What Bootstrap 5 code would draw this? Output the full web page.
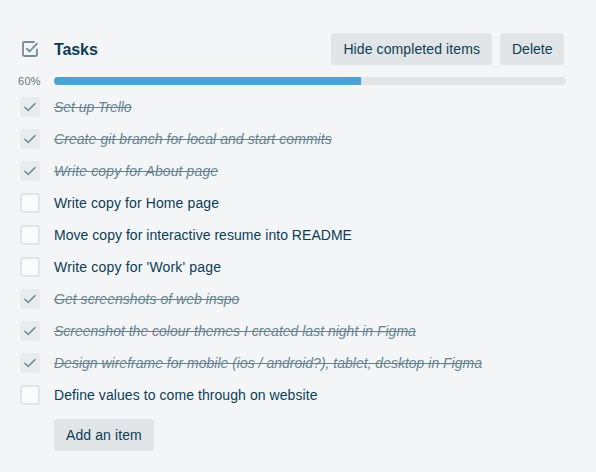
<!DOCTYPE html>
<html lang="en">
<head>
<meta charset="utf-8">
<meta name="viewport" content="width=device-width, initial-scale=1">
<title>Tasks</title>
<link href="https://cdn.jsdelivr.net/npm/bootstrap@5.3.0/dist/css/bootstrap.min.css" rel="stylesheet">
<style>
  body { background: #f4f5f7; color: #0c3d54; font: 14px/20px "Liberation Sans", Arial, sans-serif; }
  .checklist { padding: 33px 30px 21px 18px; }
  .gutter { width: 36px; flex: none; }
  .gutter svg { display: block; }
  .title { font-size: 16px; font-weight: 700; line-height: 20px; letter-spacing: -.1px; padding-top: 1px; }
  .btn-soft { --bs-btn-bg: #e2e5e8; --bs-btn-color: #0c3d54; --bs-btn-hover-bg: #d6dadd; --bs-btn-border-width: 0;
    --bs-btn-font-size: 14px; --bs-btn-line-height: 20px; --bs-btn-padding-x: 12px; --bs-btn-padding-y: 6px; --bs-btn-border-radius: 3px;
    height: 32px; white-space: nowrap; letter-spacing: .1px; }
  .btn-delete { width: 64px; letter-spacing: 0; }
  .header-actions { margin-right: 2px; }
  .percent { font-size: 11px; line-height: 10px; letter-spacing: .3px; color: #5e7884; }
  .meter { --bs-progress-height: 8px; --bs-progress-bg: #e2e5e8; --bs-progress-bar-bg: #4aa3d3; --bs-progress-border-radius: 4px; }
  .meter-row { height: 26px; padding-top: 6px; }
  .task { height: 32px; }
  .tick { width: 20px; height: 20px; margin: 0 14px 0 2px; flex: none; border-radius: 3px; background: #fafcfc; border: 2px solid #dfe5e7; }
  .done .tick { background: #e9ecef; border: 0; color: #7893a0; }
  .done .task-name { font-style: italic; text-decoration: line-through; color: #668390; }
  .tick svg { display: block; }
  .tight { letter-spacing: -.06px; }
  .snug { letter-spacing: .035px; }
  .airy { letter-spacing: .07px; }
  .loose { letter-spacing: .115px; }
  .wide { letter-spacing: .17px; }
  .add-row { padding: 8px 0 0 36px; }
</style>
<script src="https://cdn.jsdelivr.net/npm/bootstrap@5.3.0/dist/js/bootstrap.bundle.min.js" defer></script>
</head>
<body>
<svg class="d-none" aria-hidden="true">
  <symbol id="check" viewBox="0 0 20 20"><path d="M4.9 10.3 8.2 13.4 15 6.6" fill="none" stroke="currentColor" stroke-width="1.6" stroke-linecap="round" stroke-linejoin="round"/></symbol>
</svg>
<main class="checklist">
  <header class="d-flex align-items-center">
    <div class="gutter">
      <svg width="24" height="24" viewBox="0 0 24 24" fill="none" stroke="#738d99" stroke-width="1.8" stroke-linecap="round" stroke-linejoin="round"><path d="M16 5H6.2Q5 5 5 6.2V17.8Q5 19 6.2 19H17.8Q19 19 19 17.8V12.5"/><path d="M8.8 11.6 11.6 14.5 18.9 6.6"/></svg>
    </div>
    <h1 class="title mb-0 me-auto">Tasks</h1>
    <div class="header-actions d-flex gap-2">
      <button class="btn btn-soft" type="button">Hide completed items</button>
      <button class="btn btn-soft btn-delete" type="button">Delete</button>
    </div>
  </header>
  <div class="meter-row d-flex align-items-center">
    <div class="gutter percent">60%</div>
    <div class="progress meter flex-grow-1" role="progressbar" aria-valuenow="60" aria-valuemin="0" aria-valuemax="100"><div class="progress-bar" style="width: 60%"></div></div>
  </div>
  <ul class="list-unstyled mb-0">
    <li class="task done d-flex align-items-center"><span class="tick"><svg width="20" height="20"><use href="#check"/></svg></span><span class="task-name tight">Set up Trello</span></li>
    <li class="task done d-flex align-items-center"><span class="tick"><svg width="20" height="20"><use href="#check"/></svg></span><span class="task-name airy">Create git branch for local and start commits</span></li>
    <li class="task done d-flex align-items-center"><span class="tick"><svg width="20" height="20"><use href="#check"/></svg></span><span class="task-name loose">Write copy for About page</span></li>
    <li class="task d-flex align-items-center"><span class="tick"></span><span class="task-name loose">Write copy for Home page</span></li>
    <li class="task d-flex align-items-center"><span class="tick"></span><span class="task-name snug">Move copy for interactive resume into README</span></li>
    <li class="task d-flex align-items-center"><span class="tick"></span><span class="task-name wide">Write copy for 'Work' page</span></li>
    <li class="task done d-flex align-items-center"><span class="tick"><svg width="20" height="20"><use href="#check"/></svg></span><span class="task-name snug">Get screenshots of web inspo</span></li>
    <li class="task done d-flex align-items-center"><span class="tick"><svg width="20" height="20"><use href="#check"/></svg></span><span class="task-name">Screenshot the colour themes I created last night in Figma</span></li>
    <li class="task done d-flex align-items-center"><span class="tick"><svg width="20" height="20"><use href="#check"/></svg></span><span class="task-name">Design wireframe for mobile (ios / android?), tablet, desktop in Figma</span></li>
    <li class="task d-flex align-items-center"><span class="tick"></span><span class="task-name airy">Define values to come through on website</span></li>
  </ul>
  <div class="add-row"><button class="btn btn-soft" type="button">Add an item</button></div>
</main>
</body>
</html>
